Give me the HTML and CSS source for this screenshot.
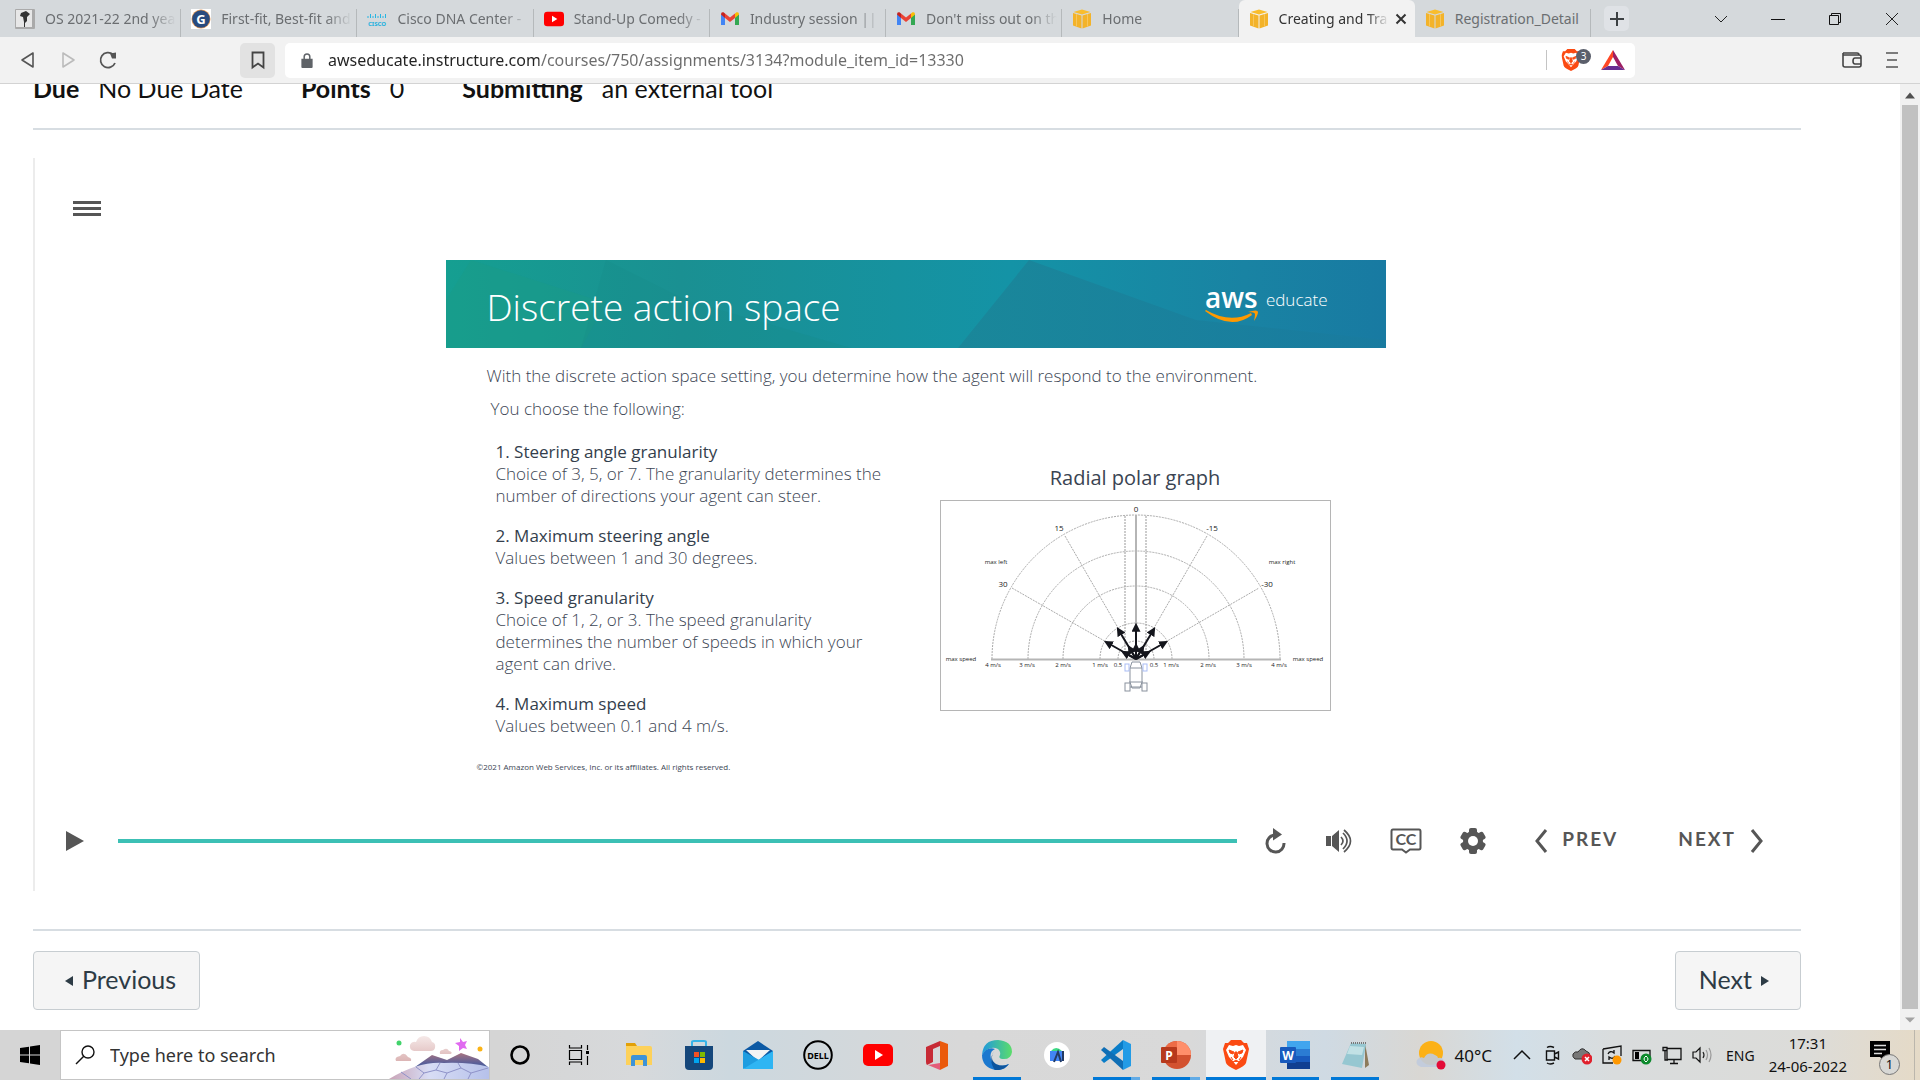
FILE: index.html
```html
<!DOCTYPE html>
<html lang="en">
<head>
<meta charset="utf-8">
<title>Creating and Training</title>
<link rel="stylesheet" href="styles.css">
</head>
<body>
<svg class="defs" aria-hidden="true">
  <symbol id="gmail" viewBox="0 0 20 20"><path d="M1 5v11h4V8z" fill="#4285f4"/><path d="M19 5v11h-4V8z" fill="#34a853"/><path d="M1 5.500l4 3.500V4.500L3.500 3.300Q1 2.500 1 5.500z" fill="#c5221f"/><path d="M5 4.500l5 4 5-4V9l-5 4-5-4z" fill="#ea4335"/><path d="M19 5.500l-4 3.500V4.500l1.500-1.200Q19 2.500 19 5.500z" fill="#fbbc04"/></symbol>
  <symbol id="cube" viewBox="0 0 20 20"><path d="M1 4l8.500 2.500v13L1 16.500zM19 4l-8.500 2.500v13l8.500-3z" fill="#f3b32a"/><path d="M1.500 3L10 .500 18.500 3 10 5.500z" fill="#f9bd2d"/><path d="M4.500 5v12.500M15.500 5v12.500" stroke="#f8c65c"/></symbol>
  <symbol id="lion" viewBox="0 0 26 30"><path d="M8 0h10l3 3 3 0 2 6-3 14q-1 3-10 7Q4 26 3 23L0 9l2-6h3z" fill="#fb4a12"/><path d="M6 5l4 1 3-1 3 1 4-1 3 5-3 7-3 3-4 5-4-5-3-3-3-7z" fill="#fff"/><path d="M6 10l5 2-1 2-3-1zM20 10l-5 2 1 2 3-1zM12 12h2l1 5-2 2-2-2zM8 17l2 3M18 17l-2 3M10 22l3-2 3 2" fill="#fb4a12" stroke="#fb4a12"/></symbol>
  <symbol id="youtube" viewBox="0 0 30 26"><rect y="2" width="30" height="22" rx="5" fill="#f00"/><path d="M12 8v10l8-5z" fill="#fff"/></symbol>
</svg>

<header class="tabs">
  <nav class="tab-list">
    <a class="tab" href="#"><svg viewBox="0 0 20 20"><rect width="20" height="20" rx="1" fill="#aaa"/><rect x="1" y="1" width="16" height="17" fill="#e7e7e7"/><path d="M6 4l5-2 4 3-3 3v4l-2 2v4H9v-5l-1-5-3-1z" fill="#333"/></svg><span class="tab-title">OS 2021-22 2nd yea</span></a>
    <a class="tab" href="#"><svg viewBox="0 0 20 20"><rect width="20" height="20" fill="#fff"/><circle cx="10" cy="10" r="9.500" fill="#e99a55"/><circle cx="10" cy="10" r="8.800" fill="#284a7e"/><text x="10" y="14.500" class="g-letter">G</text></svg><span class="tab-title">First-fit, Best-fit and</span></a>
    <a class="tab" href="#"><svg viewBox="0 0 20 20"><path d="M1 7v2M3.500 5v4M6 7v2M8.500 5v4M11 7v2M13.500 5v4M16 7v2M18.500 5v4" stroke="#26b5e3"/><text x="10" y="17" class="cisco">CISCO</text></svg><span class="tab-title">Cisco DNA Center -</span></a>
    <a class="tab" href="#"><svg><use href="#youtube"/></svg><span class="tab-title">Stand-Up Comedy -</span></a>
    <a class="tab" href="#"><svg><use href="#gmail"/></svg><span class="tab-title">Industry session || A</span></a>
    <a class="tab" href="#"><svg><use href="#gmail"/></svg><span class="tab-title">Don't miss out on th</span></a>
    <a class="tab" href="#"><svg><use href="#cube"/></svg><span class="tab-title">Home</span></a>
    <a class="tab active" href="#"><svg><use href="#cube"/></svg><span class="tab-title">Creating and Tra</span><svg class="tab-close" viewBox="0 0 12 12"><path d="M1.500 1.500l9 9M10.500 1.500l-9 9" stroke="#333" stroke-width="2"/></svg></a>
    <a class="tab" href="#"><svg><use href="#cube"/></svg><span class="tab-title plain">Registration_Detail</span></a>
  </nav>
  <button class="new-tab" aria-label="New tab"><svg viewBox="0 0 24 24"><path d="M12 5v14M5 12h14" stroke="#3c4043" stroke-width="2"/></svg></button>
  <div class="window-controls">
    <button aria-label="Search tabs"><svg viewBox="0 0 16 16"><path d="M2 5l6 6 6-6" stroke="#222" fill="none"/></svg></button>
    <button aria-label="Minimize"><svg viewBox="0 0 16 16"><path d="M1 8.500h14" stroke="#111"/></svg></button>
    <button aria-label="Restore"><svg viewBox="0 0 16 16"><path d="M2.500 4.500h9v9h-9zM4.500 4.500v-2h9v9h-2" stroke="#111" fill="none"/></svg></button>
    <button aria-label="Close"><svg viewBox="0 0 16 16"><path d="M2 2l12 12M14 2L2 14" stroke="#222"/></svg></button>
  </div>
</header>

<div class="toolbar">
  <button class="tool" aria-label="Back"><svg viewBox="0 0 20 20"><path d="M15 3v14L4 10z" fill="none" stroke="#555" stroke-width="1.600" stroke-linejoin="round"/></svg></button>
  <button class="tool" aria-label="Forward"><svg viewBox="0 0 20 20"><path d="M5 3v14l11-7z" fill="none" stroke="#bbb" stroke-width="1.600" stroke-linejoin="round"/></svg></button>
  <button class="tool" aria-label="Reload"><svg viewBox="0 0 20 20"><path d="M15 4.500A7.500 7.500 0 1 0 17 13" fill="none" stroke="#555" stroke-width="1.800"/><path d="M12 3.500l6-1v6h-4z" fill="#555"/></svg></button>
  <button class="tool bookmark" aria-label="Bookmark"><svg viewBox="0 0 20 20"><path d="M4.500 2.500h11v15L10 13.500l-5.500 4z" fill="none" stroke="#444" stroke-width="1.800"/></svg></button>
  <div class="address">
    <svg class="lock" viewBox="0 0 12 16"><path d="M0 6h12v9q0 1-1 1H1q-1 0-1-1z" fill="#5f6368"/><path d="M3 7V4q0-3 3-3t3 3v3" fill="none" stroke="#5f6368" stroke-width="1.600"/></svg>
    <input class="url" aria-label="Address" value="awseducate.instructure.com/courses/750/assignments/3134?module_item_id=13330">
    <span class="address-divider"></span>
    <button class="shield" aria-label="Brave Shields"><svg viewBox="0 0 26 30"><use href="#lion"/></svg><span class="badge">3</span></button>
    <button class="rewards" aria-label="Rewards"><svg viewBox="0 0 24 20"><path d="M12 0L0 20l7-4 5-9z" fill="#ff4724"/><path d="M12 0l12 20-7-4-5-9z" fill="#9e1f63"/><path d="M0 20h24l-7-4H7z" fill="#662d91"/></svg></button>
  </div>
  <div class="toolbar-end">
    <button class="tool" aria-label="Wallet"><svg viewBox="0 0 22 20"><path d="M2 3h14q2 0 2 2M2 3v12q0 2 2 2h14q2 0 2-2V7q0-2-2-2H2M20 8h-6q-2 0-2 3t2 3h6" fill="none" stroke="#444" stroke-width="1.600"/></svg></button>
    <button class="tool" aria-label="Menu"><svg viewBox="0 0 20 20"><path d="M4 3h12M5 10h10M4 17h12" stroke="#555" stroke-width="1.600"/></svg></button>
  </div>
</div>

<div class="viewport">
  <main class="page">
    <dl class="details">
      <div><dt>Due</dt><dd>No Due Date</dd></div>
      <div><dt>Points</dt><dd>0</dd></div>
      <div><dt>Submitting</dt><dd>an external tool</dd></div>
    </dl>
    <section class="player">
      <button class="outline" aria-label="Course outline"><svg viewBox="0 0 28 18"><path d="M0 2.500h28M0 8.500h28M0 14.500h28" stroke="#565656" stroke-width="3"/></svg></button>
      <article class="slide">
        <div class="banner">
          <svg class="facets" viewBox="0 0 940 88" preserveAspectRatio="none">
            <defs>
              <linearGradient id="sea"><stop offset="0" stop-color="#159f91"/><stop offset=".25" stop-color="#1a9092"/><stop offset=".6" stop-color="#1493a6"/><stop offset=".85" stop-color="#1983a3"/><stop offset="1" stop-color="#187aa2"/></linearGradient>
              <linearGradient id="shade"><stop offset="0" stop-color="#1b8497"/><stop offset="1" stop-color="#197b9f"/></linearGradient>
            </defs>
            <path d="M0 0h940v88H0z" fill="url(#sea)"/>
            <path d="M583 0L512 88h428V80L750 60z" fill="url(#shade)" opacity=".8"/>
            <path d="M25 0L0 40v48h135l25-45z" fill="#1c9a85" opacity=".4"/>
            <path d="M160 0l-25 88h270L240 40z" fill="#178b88" opacity=".3"/>
          </svg>
          <h1>Discrete action space</h1>
          <div class="brand"><span class="aws">aws<svg viewBox="0 0 54 14"><path d="M0 1Q26 21 47 5l-1-2Q25 14 1 0z" fill="#f90"/><path d="M43 2q10-3 10 0t-4 9q1-5 1-7t-7-2z" fill="#f90"/></svg></span><span class="educate">educate</span></div>
        </div>
        <p class="intro">With the discrete action space setting, you determine how the agent will respond to the environment.</p>
        <p class="choose">You choose the following:</p>
        <div class="columns">
          <div class="settings">
            <div><h2>1. Steering angle granularity</h2><p>Choice of 3, 5, or 7. The granularity determines the<br>number of directions your agent can steer.</p></div>
            <div><h2>2. Maximum steering angle</h2><p>Values between 1 and 30 degrees.</p></div>
            <div><h2>3. Speed granularity</h2><p>Choice of 1, 2, or 3. The speed granularity<br>determines the number of speeds in which your<br>agent can drive.</p></div>
            <div><h2>4. Maximum speed</h2><p>Values between 0.1 and 4 m/s.</p></div>
          </div>
          <figure class="graph">
            <figcaption>Radial polar graph</figcaption>
            <svg viewBox="0 0 389 209">
              <defs><marker id="tip" viewBox="0 0 8 8" refX="6" refY="4" markerWidth="9" markerHeight="9" markerUnits="userSpaceOnUse" orient="auto"><path d="M0 0l8 4-8 4z" fill="#14151c"/></marker></defs>
              <g class="arcs"><path d="M51 158a144 144 0 0 1 288 0"/><path d="M87 158a108 108 0 0 1 216 0"/><path d="M122 158a73 73 0 0 1 146 0"/><path d="M159 158a36 36 0 0 1 72 0"/><path d="M177 158a18 18 0 0 1 36 0"/><path d="M124 35l71 123 71-123M71 87l124 71 123-71"/></g>
              <path class="lanes" d="M184 15v140M205 15v140"/>
              <path class="axis" d="M50 158.500h290M195 14v144"/>
              <g class="arrows"><path d="M195 158v-34"/><path d="M195 158l-18-30"/><path d="M195 158l18-30"/><path d="M195 158l-30-17"/><path d="M195 158l30-17"/><path d="M195 158v-14"/><path d="M195 158l-7-12"/><path d="M195 158l7-12"/><path d="M195 158l-13-7"/><path d="M195 158l13-7"/></g>
              <g class="car"><path d="M191 161h8l2 6v14l-2 6h-8l-2-6v-14zM188 181h14M188 186h14M189 167h12"/><rect x="184" y="182" width="5" height="8"/><rect x="201" y="182" width="5" height="8"/><rect class="wheel" x="184" y="163" width="4" height="7"/><rect class="wheel" x="202" y="163" width="4" height="7"/></g>
              <g class="angles"><text x="195" y="11">0</text><text x="118" y="30">15</text><text x="271" y="30">-15</text><text x="62" y="86">30</text><text x="326" y="86">-30</text></g>
              <g class="labels"><text x="55" y="63">max left</text><text x="341" y="63">max right</text><text x="20" y="160">max speed</text><text x="367" y="160">max speed</text><text x="52" y="166">4 m/s</text><text x="86" y="166">3 m/s</text><text x="122" y="166">2 m/s</text><text x="159" y="166">1 m/s</text><text x="177" y="166">0.5</text><text x="213" y="166">0.5</text><text x="230" y="166">1 m/s</text><text x="267" y="166">2 m/s</text><text x="303" y="166">3 m/s</text><text x="338" y="166">4 m/s</text></g>
            </svg>
          </figure>
        </div>
        <p class="copyright">©2021 Amazon Web Services, Inc. or its affiliates. All rights reserved.</p>
      </article>
      <div class="controls">
        <button aria-label="Play"><svg width="18" height="22" viewBox="0 0 18 22"><path d="M0 1l18 10L0 21z" fill="#565656"/></svg></button>
        <progress value="1" max="1" aria-label="Slide progress"></progress>
        <div class="player-icons">
          <button aria-label="Replay"><svg viewBox="0 0 26 26"><path d="M13 7a8.500 8.500 0 1 0 9 8" fill="none" stroke="#565656" stroke-width="3"/><path d="M11 0l9 6.500-9 6z" fill="#565656"/></svg></button>
          <button aria-label="Volume"><svg viewBox="0 0 26 26"><path d="M0 8h5v10H0zM6 8l7-6v22l-7-6z" fill="#565656"/><path d="M15 9q4 4 0 8M17 5q8 8 0 16M18 2q13 11 0 22" fill="none" stroke="#565656" stroke-width="1.700"/></svg></button>
          <button aria-label="Captions"><svg class="captions" viewBox="0 0 32 26"><path d="M3 1.500h26q1.500 0 1.500 2v16q0 2-1.500 2H20l-4 3-4-3H3q-1.500 0-1.500-2v-16q0-2 1.500-2z" fill="none" stroke="#565656" stroke-width="2"/><text x="16" y="17">CC</text></svg></button>
          <button aria-label="Settings"><svg viewBox="0 0 26 26"><g fill="#565656"><rect x="9" y="0" width="8" height="26" rx="2"/><rect x="9" y="0" width="8" height="26" rx="2" transform="rotate(60 13 13)"/><rect x="9" y="0" width="8" height="26" rx="2" transform="rotate(120 13 13)"/><circle cx="13" cy="13" r="10"/></g><circle cx="13" cy="13" r="5" fill="#fff"/></svg></button>
        </div>
        <button class="step"><svg viewBox="0 0 14 24"><path d="M12 1L3 12l9 11" fill="none" stroke="#565656" stroke-width="3"/></svg><span>PREV</span></button>
        <button class="step"><span>NEXT</span><svg viewBox="0 0 14 24"><path d="M2 1l9 11-9 11" fill="none" stroke="#565656" stroke-width="3"/></svg></button>
      </div>
    </section>
    <footer class="sequence">
      <a href="#"><svg viewBox="0 0 8 12"><path d="M8 1v10L0 6z"/></svg>Previous</a>
      <a href="#">Next<svg viewBox="0 0 8 12"><path d="M0 1v10l8-5z"/></svg></a>
    </footer>
  </main>
  <div class="scrollbar"><svg viewBox="0 0 20 20"><path d="M5 14l5-6 5 6z" fill="#505050"/></svg><span class="thumb"></span><svg viewBox="0 0 20 20"><path d="M5 8l5 5 5-5z" fill="#a3a3a3"/></svg></div>
</div>

<footer class="taskbar">
  <button class="start" aria-label="Start"><svg viewBox="0 0 20 20"><path d="M0 3l9-1.300V9.500H0zM10 1.500L20 0v9.500H10zM0 10.500h9v7.800L0 17zM10 10.500h10V20l-10-1.500z"/></svg></button>
  <label class="search">
    <svg class="glass" viewBox="0 0 20 20"><circle cx="13" cy="7" r="6" fill="none" stroke="#111" stroke-width="1.400"/><path d="M9 11l-8 8" stroke="#111" stroke-width="1.400"/></svg>
    <input type="search" placeholder="Type here to search" aria-label="Type here to search">
    <svg class="doodle" viewBox="0 0 100 46">
      <defs><linearGradient id="hill" x2="0" y2="1"><stop offset="0" stop-color="#a87481"/><stop offset=".6" stop-color="#5a5f98"/><stop offset="1" stop-color="#365d9d"/></linearGradient><linearGradient id="ice"><stop offset="0" stop-color="#c9a4b7"/><stop offset=".4" stop-color="#d8ddf5"/><stop offset="1" stop-color="#b6c1ea"/></linearGradient><linearGradient id="puff" x2="0" y2="1"><stop offset="0" stop-color="#f5e9e8"/><stop offset="1" stop-color="#dcb5b5"/></linearGradient></defs>
      <g fill="url(#puff)"><path d="M25 18q-5-1-4-6 2-4 6-3 2-6 8-6t8 6q4 1 3 6-1 3-4 3zM7 28q-2-4 4-5 4-5 8 1 4 1 3 4zM51 21q-1-4 3-4 4-3 6 1 4 1 2 3z"/></g>
      <path d="M26 34l17-12 15 5 14-7 17 6 10 8v3H26z" fill="url(#hill)"/>
      <path d="M0 46q30-18 55-16 25-1 45 4v12z" fill="url(#ice)"/>
      <path d="M12 39l10 7M27 34l8 6-5 6M35 40l12-3 4-7M47 37l11 3-3 6M58 40l14-5-3-5M72 35l10 5-3 6M82 40l17-5" fill="none" stroke="#8f93c9"/>
      <circle cx="10" cy="10" r="2.500" fill="#42d36b"/><circle cx="91" cy="16" r="2.500" fill="#fbb315"/><path d="M71 5l3 4 4-1-2 4 2 4-4-1-4 3v-5l-4-3 5-1z" fill="#e06af0"/>
    </svg>
  </label>
  <nav class="apps">
    <button aria-label="Cortana"><svg viewBox="0 0 30 30"><circle cx="15" cy="15" r="8.500" fill="none" stroke="#000" stroke-width="2.600"/></svg></button>
    <button aria-label="Task View"><svg viewBox="0 0 30 30"><path d="M5.500 10.500h12v9h-12zM5.500 5v3h12V5M5.500 25v-3h12v3M23.500 5v5M23.500 16v9" fill="none" stroke="#000" stroke-width="1.200"/><path d="M22 11h3v3h-3z"/></svg></button>
    <button aria-label="File Explorer"><svg viewBox="0 0 30 30"><path d="M2 3h9l2 3h13v4H2z" fill="#e2a008"/><path d="M2 6h24q2 0 2 2v17H2z" fill="#fdd15a"/><path d="M7 26V17q0-2 2-2h12q2 0 2 2v9h-4v-6h-8v6z" fill="#3d93d8"/></svg></button>
    <button aria-label="Microsoft Store"><svg viewBox="0 0 30 30"><path d="M8 7V2q0-1 2-1h10q2 0 2 1v5" fill="none" stroke="#37b3e8" stroke-width="2"/><path d="M1 6h28v20q0 4-4 4H5q-4 0-4-4z" fill="#15477b"/><path d="M10 12h5v5h-5z" fill="#f25022"/><path d="M16 12h5v5h-5z" fill="#7fba00"/><path d="M10 18h5v5h-5z" fill="#00a4ef"/><path d="M16 18h5v5h-5z" fill="#ffb900"/></svg></button>
    <button aria-label="Mail"><svg viewBox="0 0 30 30"><path d="M0 11L15 1l15 10v17H0z" fill="#0c59a4"/><path d="M3 10h24L15 21z" fill="#f4f4f4"/><path d="M0 11l18 10-18 8z" fill="#1f9de0"/><path d="M30 11L0 29h30z" fill="#2fb5f3"/></svg></button>
    <button aria-label="Dell"><svg viewBox="0 0 30 30"><circle cx="15" cy="15" r="13.800" fill="none" stroke="#000" stroke-width="2"/><text x="15" y="19" class="dell">DELL</text></svg></button>
    <button aria-label="YouTube"><svg><use href="#youtube"/></svg></button>
    <button aria-label="Office"><svg viewBox="0 0 30 30"><path d="M4 7L18 1v5l-7 3v13l-6 3q-1-1-1-3z" fill="#c72a35"/><path d="M18 1l8 3v22l-8 4z" fill="#ea5a0c"/><path d="M6 25l12-2v7z" fill="#e45b78"/></svg></button>
    <button class="running" aria-label="Edge"><svg viewBox="0 0 30 30"><defs><linearGradient id="wave"><stop offset="0" stop-color="#2098df"/><stop offset="1" stop-color="#5bdd6a"/></linearGradient></defs><path d="M0 15Q1 0 16 0q14 1 14 12-1 8-10 7-4-1-2-4 1-3-2-6Q7 5 0 15z" fill="url(#wave)"/><path d="M0 15Q5 6 13 9q-7 3-3 13 5 7 17 2-5 7-14 6Q0 27 0 15z" fill="#1b78cf"/><path d="M12 11q-5 8 2 13 7 3 13 0-6 7-14 6-7-9-1-19z" fill="#0d559e"/></svg></button>
    <button aria-label="Android Studio"><svg viewBox="0 0 30 30"><circle cx="15" cy="15" r="13" fill="#fff"/><rect x="8" y="11" width="12" height="10" fill="#4285f4"/><path d="M9 11q5-6 11 0z" fill="#3ddc84"/><path d="M12 22l4-10 3 10M21 11v10" fill="none" stroke="#243b63" stroke-width="2"/></svg></button>
    <button class="running many" aria-label="Visual Studio Code"><svg viewBox="0 0 30 30"><path d="M22 0l8 4v22l-8 4z" fill="#229be6"/><path d="M0 20l3 3L22 9V0z" fill="#0a7dc8"/><path d="M0 10l3-3 19 14v9z" fill="#0f6eb5"/></svg></button>
    <button class="running many" aria-label="PowerPoint"><svg viewBox="0 0 30 30"><circle cx="16" cy="15" r="14" fill="#d35230"/><path d="M16 1a14 14 0 0 1 14 14H16z" fill="#ff8f6b"/><path d="M2 15a14 14 0 0 1 14-14v14z" fill="#ed6c47"/><rect y="7" width="16" height="16" rx="1" fill="#b7391c"/><text x="8" y="20" class="app-letter">P</text></svg></button>
    <button class="running current" aria-label="Brave"><svg viewBox="0 0 26 30"><use href="#lion"/></svg></button>
    <button class="running" aria-label="Word"><svg viewBox="0 0 30 30"><path d="M7 1h23v8H7z" fill="#41a5ee"/><path d="M7 9h23v7H7z" fill="#2b7cd3"/><path d="M7 16h23v7H7z" fill="#185abd"/><path d="M7 22h23v7H7z" fill="#103f91"/><rect y="7" width="16" height="16" rx="1" fill="#185abd"/><text x="8" y="20" class="app-letter">W</text></svg></button>
    <button class="running" aria-label="Notepad"><svg viewBox="0 0 30 30"><path d="M25 3l4 22-4 3z" fill="#8d7b5b"/><path d="M11 3l15 1-4 24-20-4z" fill="#96c7d1"/><path d="M10 6l14 1-2 8-15-1z" fill="#c1e1e5"/><path d="M11 3h15" stroke="#777" stroke-width="2" stroke-dasharray="1 1"/></svg></button>
  </nav>
  <div class="tray">
    <button class="weather"><svg viewBox="0 0 30 30"><circle cx="15" cy="13" r="12" fill="#fcb116"/><path d="M5 27q-6-2-4-7 3-4 7-2 4-7 11-3 3 1 3 3 6-1 6 5-1 4-5 4z" fill="#c0cbdd" opacity=".9"/><circle cx="25" cy="25" r="4.500" fill="#e30b37"/></svg>40°C</button>
    <div class="status">
      <svg viewBox="0 0 20 20"><path d="M2 14l8-8 8 8" fill="none" stroke="#111" stroke-width="1.500"/></svg>
      <svg viewBox="0 0 20 20"><path d="M4.500 6h8v9h-8zM12.500 9l4-2v7l-4-2M5 2.500q3-2 7 0M5 18q3 2 7 0" fill="none" stroke="#111" stroke-width="1.400"/></svg>
      <svg viewBox="0 0 20 20"><path d="M3 14q-3-2-2-5 2-3 5-2 4-6 8-1 4 1 4 5l-3 3z" fill="#777" stroke="#333"/><circle cx="15" cy="14" r="5.500" fill="#e0202c"/><path d="M13 12l4 4M17 12l-4 4" stroke="#fff" stroke-width="1.500"/></svg>
      <svg viewBox="0 0 20 20"><path d="M1 4l18-3v10M1 4v14h10" fill="none" stroke="#111" stroke-width="1.300"/><path d="M6 9q2-4 6-1V5M13 11q-2 4-6 1v3" fill="none" stroke="#111" stroke-width="1.300"/><circle cx="15" cy="15" r="4.500" fill="#ff9800"/></svg>
      <svg viewBox="0 0 20 20"><path d="M1 5.500h17v10H1z" fill="none" stroke="#111" stroke-width="1.300"/><path d="M3 7h4v7H3z"/><circle cx="14" cy="14" r="5.500" fill="#0c8a2c"/><path d="M14 11q4 3 0 6-4-3 0-6z" fill="none" stroke="#fff"/></svg>
      <svg viewBox="0 0 20 20"><path d="M5 3.500h14v11H5zM12 14.500v4M8 18.500h8M1 2.500h4v3H1zM3 6v9h3" fill="none" stroke="#111" stroke-width="1.300"/></svg>
      <svg viewBox="0 0 20 20"><path d="M1 7h3l4-4v14l-4-4H1z" fill="none" stroke="#111" stroke-width="1.200"/><path d="M11 7q2 3 0 6" fill="none" stroke="#222" stroke-width="1.200"/><path d="M14 5q3 5 0 10M17 3q4 7 0 14" fill="none" stroke="#999" stroke-width="1.200"/></svg>
    </div>
    <span class="language">ENG</span>
    <div class="clock"><time>17:31</time><time>24-06-2022</time></div>
    <button class="notes" aria-label="Notifications"><svg viewBox="0 0 20 20"><path d="M0 0h20v16h-6v4l-4-4H0z"/><path d="M4 4.500h12M4 8.500h12M4 12.500h8" stroke="#ddd" stroke-width="1.400"/></svg><span class="count">1</span></button>
  </div>
</footer>
</body>
</html>
```
FILE: styles.css
```css
* { box-sizing: border-box; margin: 0; padding: 0; }
body { display: flex; flex-direction: column; height: 100vh; overflow: hidden; background: #fff; color: #222; font-family: "Noto Sans", sans-serif; font-size: 15px; }
button, input { font: inherit; color: inherit; border: 0; background: none; }
button { display: flex; align-items: center; justify-content: center; }
a { color: inherit; text-decoration: none; }
svg { display: block; flex: none; }
.defs { position: absolute; width: 0; height: 0; }

/* Tab strip */
.tabs { display: flex; height: 37px; flex: none; background: #d5d9dc; }
.tab-list { display: flex; flex: 0 1 1586px; margin-left: 5px; min-width: 0; }
.tab { display: flex; flex: 1; min-width: 0; align-items: center; gap: 10px; padding: 0 5px 0 10px; color: #6b6e71; font-size: 14px; background: linear-gradient(#b5b9bb, #b5b9bb) right 9px / 1px 28px no-repeat; }
.tab > svg { width: 20px; height: 20px; }
.tab .tab-close { width: 12px; height: 12px; margin: 0 3px 0 -4px; }
.tab-title { flex: 1; min-width: 0; overflow: hidden; white-space: nowrap; -webkit-mask-image: linear-gradient(90deg, #000 80%, transparent); mask-image: linear-gradient(90deg, #000 80%, transparent); }
.tab-title.plain { -webkit-mask-image: none; mask-image: none; }
.tab.active { background: #f2f2f2; color: #333; border-radius: 6px 6px 0 0; }
.g-letter { font: 700 13px "Noto Sans", sans-serif; fill: #fff; text-anchor: middle; }
.cisco { font: 700 6px "Noto Sans", sans-serif; fill: #1ab0df; text-anchor: middle; }
.new-tab { width: 25px; height: 25px; margin: 6px 0 0 13px; border-radius: 5px; background: #dfe2e6; }
.new-tab svg { width: 24px; }
.window-controls { display: flex; margin-left: auto; }
.window-controls button { width: 57px; }
.window-controls svg { width: 16px; }

/* Toolbar */
.toolbar { display: flex; flex: none; align-items: center; height: 47px; padding: 0 8px; background: #f2f2f2; border-bottom: 1px solid #d3d3d3; }
.tool { width: 40px; height: 35px; }
.tool svg { width: 20px; height: 20px; }
.bookmark { width: 35px; margin: 0 10px 0 112px; border-radius: 5px; background: #e2e2e2; }
.address { display: flex; flex: 0 1 1350px; align-items: center; height: 35px; padding: 0 6px 0 16px; border-radius: 5px; background: #fff; }
.lock { width: 12px; height: 15px; margin-right: 15px; }
.url { flex: 1; min-width: 0; font-size: 16px; color: transparent; background: linear-gradient(90deg, #222 211px, #6b6b6b 211px); -webkit-background-clip: text; background-clip: text; }
.address-divider { width: 1px; height: 20px; background: #c4c4c4; }
.shield { position: relative; width: 32px; margin-left: 10px; }
.shield svg { width: 20px; height: 22px; margin-right: 4px; }
.badge { position: absolute; top: 0; right: -2px; width: 15px; height: 15px; border-radius: 8px; background: #5b5f6b; color: #fff; font-size: 10px; line-height: 15px; }
.rewards { width: 32px; margin-left: 8px; }
.rewards svg { width: 24px; height: 20px; }
.toolbar-end { display: flex; margin-left: auto; }
.toolbar-end svg { width: 22px; }

/* Page viewport */
.viewport { display: flex; flex: 1; min-height: 0; overflow: hidden; }
.page { flex: 1; min-width: 0; padding: 0 99px 0 33px; font-family: Lato, sans-serif; }
.details { display: flex; gap: 58px; height: 46px; border-bottom: 2px solid #d7dde2; font-size: 25px; line-height: 30px; color: #111; white-space: nowrap; }
.details div { display: flex; gap: 19px; margin-top: -11px; }
.details dt { font-weight: 700; }
.player { display: flex; flex-direction: column; margin-top: 28px; padding: 0 5px 37px 0; border-left: 2px solid #ececec; }
.outline { align-self: flex-start; margin: 42px 0 0 38px; }
.outline svg { width: 28px; height: 18px; }

/* Slide */
.slide { width: 100%; max-width: 940px; margin: 42px auto 0; font-family: "Open Sans", sans-serif; font-weight: 300; color: #3c4654; }
.banner { display: flex; position: relative; align-items: center; justify-content: space-between; height: 88px; padding: 0 58px 0 41px; color: #fff; }
.facets { position: absolute; inset: 0; width: 100%; height: 100%; }
.banner h1, .brand { position: relative; }
.banner h1 { font-size: 37px; font-weight: 300; padding-top: 4px; }
.brand { display: flex; gap: 7px; }
.aws { font-size: 28px; font-weight: 600; line-height: 26px; }
.aws svg { width: 54px; height: 14px; }
.educate { font-size: 17px; line-height: 32px; }
.intro, .choose, .settings { font-size: 17px; line-height: 22px; }
.intro { margin: 17px 0 0 41px; }
.choose { margin: 11px 0 0 45px; }
.columns { display: flex; justify-content: space-between; margin: 21px 56px 0 50px; }
.settings { display: flex; flex-direction: column; gap: 18px; }
.settings h2 { font-size: 17px; line-height: 22px; font-weight: 500; color: #333e4c; }
.graph { width: 389px; margin-top: 23px; }
.graph figcaption { font-size: 20px; line-height: 28px; font-weight: 400; text-align: center; color: #3a4452; }
.graph > svg { width: 100%; margin-top: 9px; outline: 1px solid #b5b5b5; }
.arcs path, .lanes, .axis { fill: none; stroke: #aaa; stroke-width: 1; stroke-dasharray: 2 1; }
.lanes { stroke: #999; }
.axis { stroke: #b5b5b5; stroke-dasharray: none; stroke-width: 2; }
.arrows path { stroke: #14151c; stroke-width: 2; marker-end: url(#tip); }
.car { fill: #fff; stroke: #8a929e; }
.wheel { stroke: #a9bdf5; }
.angles, .labels { font: 400 8px "Open Sans", sans-serif; text-anchor: middle; fill: #222; }
.labels { font-size: 6px; }
.copyright { margin: 22px 0 0 31px; font-size: 8px; line-height: 16px; font-weight: 400; }

/* Player controls */
.controls { display: flex; align-items: center; margin-top: 53px; padding: 0 32px 0 31px; color: #565656; }
.controls progress { flex: 1; height: 4px; margin: 0 25px 0 34px; appearance: none; border: 0; }
.controls progress::-webkit-progress-bar { background: #ddd; }
.controls progress::-webkit-progress-value { background: #3cc0b5; }
.player-icons { display: flex; gap: 38px; margin-right: 48px; }
.player-icons svg { width: 26px; height: 26px; }
.player-icons .captions { width: 32px; }
.captions text { font: 700 16px Lato, sans-serif; text-anchor: middle; fill: #565656; }
.step { gap: 14px; font-size: 19px; font-weight: 700; letter-spacing: 2px; }
.step span { margin-top: -6px; }
.step svg { width: 14px; height: 24px; }
.step + .step { margin-left: 60px; }

/* Module navigation */
.sequence { display: flex; justify-content: space-between; margin-top: 38px; padding-top: 20px; border-top: 2px solid #d7dde2; }
.sequence a { display: flex; align-items: center; gap: 9px; height: 59px; padding: 0 23px 4px 31px; border: 1px solid #c7cdd1; border-radius: 4px; background: #f5f5f5; color: #2d3b45; font-size: 25px; }
.sequence a + a { padding: 0 31px 4px 23px; }
.sequence svg { width: 8px; height: 12px; margin-top: 4px; fill: #2d3b45; }

.scrollbar { display: flex; flex-direction: column; align-items: center; width: 20px; background: #f1f1f1; }
.scrollbar svg { width: 20px; height: 21px; }
.thumb { flex: 1; width: 16px; background: #c1c1c1; }

/* Taskbar */
.taskbar { display: flex; flex: none; height: 50px; background: linear-gradient(90deg, #d5d5d5 0 26%, #d7d9db 33%, #ccd8df 38%, #d8d8d8 50%, #d9d9d9 62%, #cfdae3 69%, #d9d7d3 74%, #d2dfe8 79%, #d9dcdd 84%, #dcdcd9 94%, #e5dac7); color: #111; }
.start { width: 60px; }
.start svg { width: 20px; height: 20px; }
.search { display: flex; position: relative; align-items: center; width: 430px; padding-left: 14px; border: 1px solid #c5c5c5; background: #fff; }
.glass { width: 20px; height: 20px; margin-right: 15px; }
.search input { flex: 1; min-width: 0; outline: 0; font-size: 18px; }
.search input::placeholder { color: #333; opacity: 1; }
.doodle { align-self: flex-end; width: 100px; height: 46px; }
.apps { display: grid; grid-template-columns: repeat(15, 1fr); width: 895px; flex: none; }
.apps button { position: relative; }
.apps svg { width: 30px; height: 30px; }
.apps button.running::after { content: ""; position: absolute; left: 6px; right: 6px; bottom: 0; height: 3px; background: #0078d7; }
.apps button.many::after { background: linear-gradient(90deg, #0078d7 80%, #62abe6 80%); }
.apps button.current { background: #eff1f3; }
.apps button.current::after { left: 0; right: 0; }
.dell { font: 700 9px "Noto Sans", sans-serif; text-anchor: middle; }
.app-letter { font: 700 12px "Noto Sans", sans-serif; fill: #fff; text-anchor: middle; }
.tray { display: flex; flex: 1; align-items: center; justify-content: flex-end; padding-right: 18px; margin-right: 5px; border-right: 1px solid #bbb6ac; white-space: nowrap; }
.weather { gap: 9px; font-size: 17px; margin-right: 20px; }
.weather svg { width: 30px; height: 30px; }
.status { display: flex; gap: 10px; margin-right: 14px; }
.status svg { width: 20px; height: 20px; }
.language { font-size: 14px; }
.clock { display: flex; flex-direction: column; align-items: center; margin: 0 23px 0 14px; font-size: 15px; line-height: 23px; }
.notes { position: relative; width: 26px; height: 30px; }
.notes svg { width: 20px; height: 20px; margin: -9px 6px 0 0; }
.count { position: absolute; right: -4px; bottom: -5px; width: 21px; height: 21px; border: 1px solid #777; border-radius: 50%; background: #d8d8d5; font-size: 13px; line-height: 19px; }
```
